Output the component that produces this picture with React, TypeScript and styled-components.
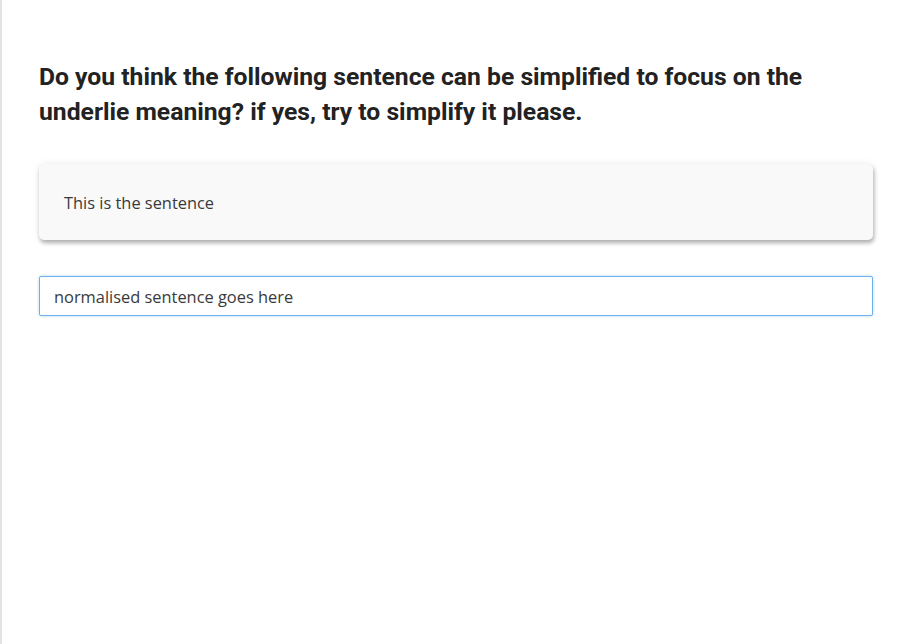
import React, { useEffect, useRef } from "react";
import styled, { createGlobalStyle } from "styled-components";

const Global = createGlobalStyle`
  html, body { margin: 0; padding: 0; background: #fff; }
  body { font-family: "Open Sans", "Noto Sans", sans-serif; color: #333; }
  * { box-sizing: border-box; }
`;

const Page = styled.div`
  min-height: 100vh;
  border-left: 2px solid #e3e3e3;
  padding: 59px 34px 0 37px;
`;

const Question = styled.h2`
  margin: 0 0 35px;
  font-family: Roboto, "Liberation Sans", sans-serif;
  font-weight: 700;
  font-size: 24.7px;
  line-height: 35px;
  color: #222;
`;

const SentenceCard = styled.div`
  background: #f9f9f9;
  border-radius: 5px;
  padding: 28px 25px 26px;
  font-size: 16.4px;
  line-height: 22px;
  color: #3a3a3a;
  box-shadow: 0 0 8px rgba(0, 0, 0, 0.06), 1px 3px 4px rgba(0, 0, 0, 0.3);
  margin-bottom: 36px;
`;

const Answer = styled.input`
  display: block;
  width: 100%;
  height: 40px;
  padding: 0 14px;
  font-family: "Open Sans", "Noto Sans", sans-serif;
  font-size: 16.4px;
  color: #3a3a3a;
  border: 1px solid #6cb0f0;
  border-radius: 2px;
  outline: none;
  box-shadow: 0 0 3px rgba(102, 175, 233, 0.5);
  background: #fff;
`;

export default function App() {
  const ref = useRef<HTMLInputElement>(null);
  useEffect(() => {
    const el = ref.current;
    if (el) {
      el.focus();
      const n = el.value.length;
      el.setSelectionRange(n, n);
    }
  }, []);
  return (
    <>
      <Global />
      <Page>
        <Question>
          Do you think the following sentence can be simplified to focus on the underlie meaning? if yes, try to simplify it please.
        </Question>
        <SentenceCard>This is the sentence</SentenceCard>
        <Answer ref={ref} defaultValue="normalised sentence goes here" />
      </Page>
    </>
  );
}
